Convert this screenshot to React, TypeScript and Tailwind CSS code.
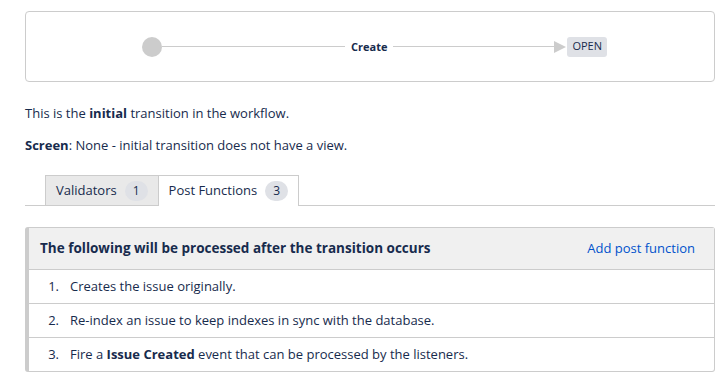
import React from "react";

const font = { fontFamily: '"Segoe UI", "Open Sans", "Noto Sans", sans-serif' };

export default function App() {
  return (
    <div className="w-[728px] h-[388px] bg-white text-[#172b4d] text-[14px] pl-[25px] pr-[13px] pt-[11px]" style={font}>
      {/* Diagram */}
      <div className="h-[71px] border border-[#cccccc] rounded-[4px] flex items-center pl-[116px]">
        <div className="w-[20px] h-[20px] rounded-full bg-[#cccccc] shrink-0" />
        <div className="w-[183px] h-px bg-[#cccccc]" />
        <div className="px-[6px] text-[11px] font-bold text-[#172b4d] leading-none">Create</div>
        <div className="w-[161px] h-px bg-[#cccccc]" />
        <svg width="12" height="12" viewBox="0 0 12 12" className="shrink-0">
          <polygon points="0,0 12,6 0,12" fill="#cccccc" />
        </svg>
        <div className="ml-[1px] h-[20px] px-[5px] flex items-center bg-[#dfe1e6] rounded-[3px] text-[11px] text-[#172b4d]">OPEN</div>
      </div>

      <p className="mt-[21px] leading-[20px] text-[13px]">
        This is the <b>initial</b> transition in the workflow.
      </p>
      <p className="mt-[12px] leading-[20px] text-[13px]">
        <b>Screen</b>: None - initial transition does not have a view.
      </p>

      {/* Tabs */}
      <div className="mt-[20px] flex pl-[20px] border-b border-[#cccccc] h-[31px]">
        <div className="flex items-center gap-[8px] px-[10px] bg-[#e9e9e9] border border-[#cccccc] border-b-0 text-[13px] h-[30px] mt-0">
          <span>Validators</span>
          <span className="bg-[#dfe1e6] rounded-full px-[8px] h-[20px] flex items-center text-[12px]">1</span>
        </div>
        <div className="flex items-center gap-[8px] px-[10px] bg-white border border-l-0 border-[#cccccc] border-b-0 text-[13px] h-[31px] -mb-px">
          <span>Post Functions</span>
          <span className="bg-[#dfe1e6] rounded-full px-[8px] h-[20px] flex items-center text-[12px]">3</span>
        </div>
      </div>

      {/* Panel */}
      <div className="mt-[21px] border border-[#cccccc] border-l-[4px] rounded-[3px] text-[13px]">
        <div className="h-[42px] bg-[#f0f0f0] flex items-center justify-between pl-[11px] pr-[19px] border-b border-[#cccccc]">
          <span className="font-bold text-[13.5px]">The following will be processed after the transition occurs</span>
          <a className="text-[#0052cc] text-[13px]">Add post function</a>
        </div>
        <div className="h-[34px] flex items-center border-b border-[#cccccc]">
          <span className="w-[30px] text-right">1.</span>
          <span className="pl-[11px]">Creates the issue originally.</span>
        </div>
        <div className="h-[34px] flex items-center border-b border-[#cccccc]">
          <span className="w-[30px] text-right">2.</span>
          <span className="pl-[11px]">Re-index an issue to keep indexes in sync with the database.</span>
        </div>
        <div className="h-[33px] flex items-center">
          <span className="w-[30px] text-right">3.</span>
          <span className="pl-[11px]">
            Fire a <b>Issue Created</b> event that can be processed by the listeners.
          </span>
        </div>
      </div>
    </div>
  );
}
